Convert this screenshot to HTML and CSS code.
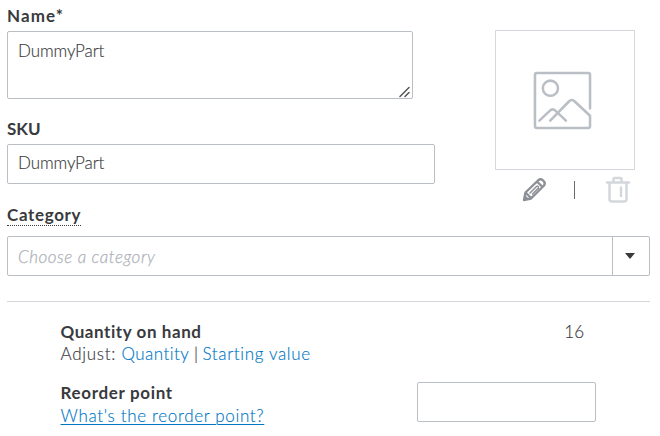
FILE: index.html
```
<!DOCTYPE html>
<html lang="en">
<head>
<meta charset="utf-8">
<title>Product information</title>
<link rel="stylesheet" href="styles.css">
</head>
<body>
<main class="form">
  <section class="top">
    <div class="fields">
      <div class="label"><span class="t-name">Name*</span></div>
      <div class="box textarea"><span class="t-value">DummyPart</span>
        <svg class="grip" width="12" height="12" viewBox="0 0 12 12"><path d="M1 10.5 10 1.5M6 10.5 10 6.5"/></svg>
      </div>
      <div class="label sku-label"><span class="t-sku">SKU</span></div>
      <div class="box input"><span class="t-value">DummyPart</span></div>
    </div>
    <aside class="media">
      <div class="preview">
        <svg width="60" height="60" viewBox="0 0 60 60"><path d="M58 38V4a2 2 0 0 0-2-2H4a2 2 0 0 0-2 2v52a2 2 0 0 0 2 2h52a2 2 0 0 0 2-2V45.500L42.500 31Q39.500 28 36.500 31L17.500 50.500M6.500 50.500 17 40.500Q20 37.500 23 40.500L33.500 50.500"/><circle cx="17.700" cy="17.500" r="7.700"/></svg>
      </div>
      <div class="actions">
        <svg class="pencil" width="26" height="26" viewBox="0 0 26 26"><path d="M3 23 4.500 15.500 17.500 3Q19.500 1.500 21.500 3L23 4.500Q24.500 6.500 23 8.500L10 21.500ZM16 4.500 21.500 10M5 16 10 21"/><path class="thin" d="M9 16 15.500 9.500Q17 8.500 17.500 10T16 12.500L11.500 17"/><path class="tip" d="M2.500 23.500 4 18 8 22Z"/></svg>
        <span class="sep"></span>
        <svg class="trash" width="26" height="28" viewBox="0 0 26 28"><path d="M2 7.500H24M8.500 7V4Q8.500 3 9.500 3H15.500Q16.500 3 16.500 4V7M4.500 8V24Q4.500 26.500 7 26.500H19Q21.500 26.500 21.500 24V8M16 12.500V21"/></svg>
      </div>
    </aside>
  </section>
  <section class="category">
    <div class="label"><span class="t-category">Category</span></div>
    <div class="box select"><span class="t-placeholder">Choose a category</span><span class="toggle"><svg width="10" height="6" viewBox="0 0 10 6"><path d="M0 0H10L5 6Z"/></svg></span></div>
  </section>
  <section class="stock">
    <div class="row quantity">
      <div>
        <div class="heading"><span class="t-quantity">Quantity on hand</span></div>
        <div class="adjust"><span class="t-adjust">Adjust:</span><a class="t-link-q">Quantity</a><span class="bar">|</span><a class="t-link-s">Starting value</a></div>
      </div>
      <span class="count">16</span>
    </div>
    <div class="row reorder">
      <div>
        <div class="heading"><span class="t-reorder">Reorder point</span></div>
        <div class="help"><a class="t-help">What's the reorder point?</a></div>
      </div>
      <div class="box point"></div>
    </div>
  </section>
</main>
</body>
</html>
```
FILE: styles.css
```
* { box-sizing: border-box; }
body { margin: 0; background: #fff; color: #393a3d; font: 400 17px/22px Lato, "Liberation Sans", sans-serif; font-variant-ligatures: none; }
.form { width: 660px; height: 436px; padding: 0 10px 0 7px; overflow: hidden; }
.form span, .form a { white-space: nowrap; }
svg { fill: none; stroke-linecap: round; stroke-linejoin: round; }
.top { display: flex; justify-content: space-between; height: 204px; }
.fields { width: 428px; padding-top: 5px; }
.label, .heading { font-weight: 700; height: 22px; }
.t-name { letter-spacing: 1.1px; }
.t-value { letter-spacing: -.1px; }
.t-value, .adjust, .count, .help { -webkit-text-stroke: .15px currentColor; }
.box { border: 1px solid #babec5; border-radius: 2px; background: #fff; }
.textarea { position: relative; width: 406px; height: 68px; margin-top: 4px; padding: 8px 10px; font-weight: 300; }
.grip { position: absolute; right: 1px; bottom: 0; stroke: #555; stroke-width: 1.5; }
.sku-label { margin-top: 19px; }
.input { height: 40px; margin-top: 4px; padding: 7px 10px; font-weight: 300; }
.media { width: 140px; margin-right: 15px; padding-top: 30px; }
.preview { display: grid; place-items: center; height: 140px; padding-right: 5px; border: 1px solid #d4d7dc; }
.preview svg { width: 59px; height: 59px; stroke: #babec5; stroke-width: 2.600; }
.actions { display: flex; align-items: center; height: 34px; padding: 6px 4px 0 26px; justify-content: space-between; }
.pencil { stroke: #8d9096; stroke-width: 2.400; }
.pencil .thin { stroke-width: 1.500; }
.pencil .tip { fill: #8d9096; stroke: none; }
.sep { width: 1px; height: 18px; margin-right: 4px; background: #6b6c72; }
.trash { margin-top: -2px; stroke: #d4d7dc; stroke-width: 2.500; }
.category { height: 98px; border-bottom: 1px solid #d4d7dc; }
.t-category { display: inline-block; height: 22px; border-bottom: 1px dotted #393a3d; line-height: 21px; letter-spacing: .65px; }
.select { display: flex; justify-content: space-between; height: 40px; margin-top: 10px; padding: 0 0 0 10px; color: #babec5; font-style: italic; line-height: 39px; }
.t-placeholder { font-weight: 300; color: #aeb2ba; letter-spacing: .55px; -webkit-text-stroke: .25px currentColor; }
.toggle { display: grid; place-items: center; width: 37px; padding-right: 2px; border-left: 1px solid #babec5; }
.toggle svg { fill: #393a3d; }
.stock { padding: 19px 54px 0 53.5px; }
.row { display: flex; justify-content: space-between; }
.quantity { height: 61px; padding-right: 12px; }
.t-quantity { letter-spacing: .57px; }
.t-reorder { letter-spacing: .66px; }
.adjust { display: flex; font-weight: 300; line-height: 21px; }
.adjust a { color: #0077c5; }
.t-adjust { width: 61px; letter-spacing: .7px; }
.adjust .t-link-q { width: 68px; letter-spacing: .45px; }
.bar { width: 13px; text-align: center; }
.t-link-s { letter-spacing: .65px; }
.count { font-weight: 300; }
.help { font-weight: 300; line-height: 24px; }
.help a { color: #0077c5; letter-spacing: .66px; text-decoration: underline; text-decoration-thickness: 1px; text-underline-offset: 2px; }
.point { width: 179px; height: 40px; }
```
